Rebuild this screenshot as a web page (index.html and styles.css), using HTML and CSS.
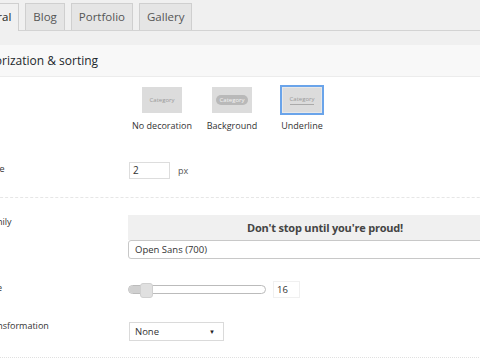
FILE: index.html
```html
<!DOCTYPE html>
<html>
<head>
<meta charset="utf-8">
<link rel="stylesheet" href="styles.css">
</head>
<body>
<div class="wrap">
  <div class="tabs">
    <div class="tab active">General</div>
    <div class="tab">Blog</div>
    <div class="tab">Portfolio</div>
    <div class="tab">Gallery</div>
  </div>
  <div class="panel">
    <div class="section">
      <div class="sec-head">Categorization &amp; sorting</div>
      <div class="row r1">
        <div class="lbl">Style</div>
        <div class="opts">
          <div class="opt">
            <div class="card"><span class="cat">Category</span></div>
            <div class="opt-lbl">No decoration</div>
          </div>
          <div class="opt">
            <div class="card"><span class="cat pill">Category</span></div>
            <div class="opt-lbl">Background</div>
          </div>
          <div class="opt">
            <div class="card sel"><span class="cat under">Category</span></div>
            <div class="opt-lbl">Underline</div>
          </div>
        </div>
      </div>
      <div class="row r2 sep">
        <div class="lbl">Dash size</div>
        <div class="ctl inline">
          <div class="num">2</div>
          <span class="unit">px</span>
        </div>
      </div>
      <div class="row r3">
        <div class="lbl">Font family</div>
        <div class="ctl">
          <div class="preview">Don't stop until you're proud!</div>
          <div class="fsel">Open Sans (700)</div>
        </div>
      </div>
      <div class="row r4">
        <div class="lbl">Font size</div>
        <div class="ctl inline">
          <div class="slider">
            <div class="fill"></div>
            <div class="handle"></div>
          </div>
          <div class="val">16</div>
        </div>
      </div>
      <div class="row r5 dots">
        <div class="lbl up">Text transformation</div>
        <div class="ctl">
          <div class="sel-box"><span>None</span><span class="arrow">▼</span></div>
        </div>
      </div>
      <div class="tail"></div>
    </div>
  </div>
</div>
</body>
</html>
```

FILE: styles.css
```css
html, body {
  margin: 0;
  padding: 0;
  background: #f0f0f0;
  overflow: hidden;
  width: 480px;
  height: 360px;
}
body {
  font-family: "Open Sans", "Noto Sans", sans-serif;
  color: #444;
}
.wrap {
  margin-left: -35px;
  width: 600px;
}
.tabs {
  display: flex;
  gap: 6px;
  padding-top: 3px;
  margin-left: -4px;
  border-bottom: 1px solid #d3d3d3;
  height: 27px;
}
.tab {
  box-sizing: border-box;
  height: 27px;
  padding: 0 7px;
  border: 1px solid #cfcfcf;
  border-bottom: none;
  background: #e5e5e5;
  color: #555;
  font-size: 11.5px;
  line-height: 26px;
}
.tab.active {
  background: #f0f0f0;
  height: 28px;
  color: #222;
}
.panel {
  padding-top: 14px;
}
.section {
  background: #fff;
}
.sec-head {
  background: #f8f8f8;
  height: 31px;
  line-height: 31px;
  border-bottom: 1px solid #ececec;
  font-size: 12px;
  color: #23282d;
  padding-left: 0;
  margin-left: -2px;
}
.row {
  display: grid;
  grid-template-columns: 163px 1fr;
}
.lbl {
  font-size: 9px;
  line-height: 14px;
  color: #333;
}
.lbl.up {
  margin-top: -3px;
}
.r1 { padding: 8px 0 20px; }
.r2 { padding: 10px 0 18px; }
.r3 { padding: 17px 0 0; }
.r4 { padding: 22px 0 0; }
.r5 { padding: 24px 0 16px; }
.sep { border-bottom: 1px dashed #e6e6e6; }
.dots { border-bottom: 1px dotted #e0e0e0; }
.tail { height: 20px; }
.opts {
  display: flex;
  margin-left: -1px;
}
.opt {
  width: 70px;
  display: flex;
  flex-direction: column;
  align-items: center;
}
.card {
  box-sizing: border-box;
  width: 44px;
  height: 30px;
  border: 2px solid transparent;
  background: #dcdcdc;
  background-clip: padding-box;
  display: flex;
  align-items: center;
  justify-content: center;
}
.card.sel {
  border-color: #6aa4ea;
  box-shadow: inset 0 0 0 1px #e8e8e8;
}
.cat {
  font-size: 6px;
  color: #999;
  line-height: 8px;
}
.cat.pill {
  background: #b9b9b9;
  color: #f4f4f4;
  border-radius: 5px;
  padding: 1px 4px;
}
.cat.under {
  border-bottom: 1px solid #aaa;
  padding-bottom: 1px;
}
.opt-lbl {
  margin-top: 5px;
  font-size: 9px;
  line-height: 12px;
  color: #333;
}
.ctl.inline {
  display: flex;
  align-items: center;
}
.num {
  box-sizing: border-box;
  width: 41px;
  height: 17px;
  margin-left: 1px;
  border: 1px solid #ddd;
  font-size: 10px;
  line-height: 15px;
  padding-left: 3px;
  color: #333;
}
.unit {
  margin-left: 8px;
  font-size: 9px;
  color: #555;
}
.preview {
  background: #f0f0f0;
  height: 25px;
  line-height: 25px;
  text-align: center;
  font-family: "Open Sans", sans-serif;
  font-weight: 700;
  font-size: 11px;
  letter-spacing: -0.2px;
  color: #444;
  width: 394px;
}
.fsel {
  box-sizing: border-box;
  height: 19px;
  border: 1px solid #c8c8c8;
  border-radius: 3px;
  font-size: 9.5px;
  line-height: 17px;
  padding-left: 6px;
  color: #333;
  width: 394px;
}
.slider {
  position: relative;
  box-sizing: border-box;
  width: 138px;
  height: 9px;
  border: 1px solid #bbb;
  border-radius: 5px;
  background: #fff;
}
.fill {
  width: 16px;
  height: 100%;
  background: #d0d0d0;
  border-radius: 4px 0 0 4px;
}
.handle {
  position: absolute;
  left: 11px;
  top: -3px;
  box-sizing: border-box;
  width: 13px;
  height: 15px;
  background: #e0e0e0;
  border: 1px solid #d0d0d0;
  border-radius: 3px;
}
.val {
  box-sizing: border-box;
  margin-left: 7px;
  width: 27px;
  height: 17px;
  border: 1px solid #f0f0f0;
  font-size: 9.5px;
  line-height: 15px;
  padding-left: 3px;
  color: #333;
}
.sel-box {
  box-sizing: border-box;
  margin-left: 1px;
  width: 95px;
  height: 19px;
  border: 1px solid #dadada;
  display: flex;
  align-items: center;
  justify-content: space-between;
  padding: 0 8px 0 5px;
  font-size: 9.5px;
  color: #333;
}
.arrow {
  font-size: 6px;
  color: #222;
}
```
